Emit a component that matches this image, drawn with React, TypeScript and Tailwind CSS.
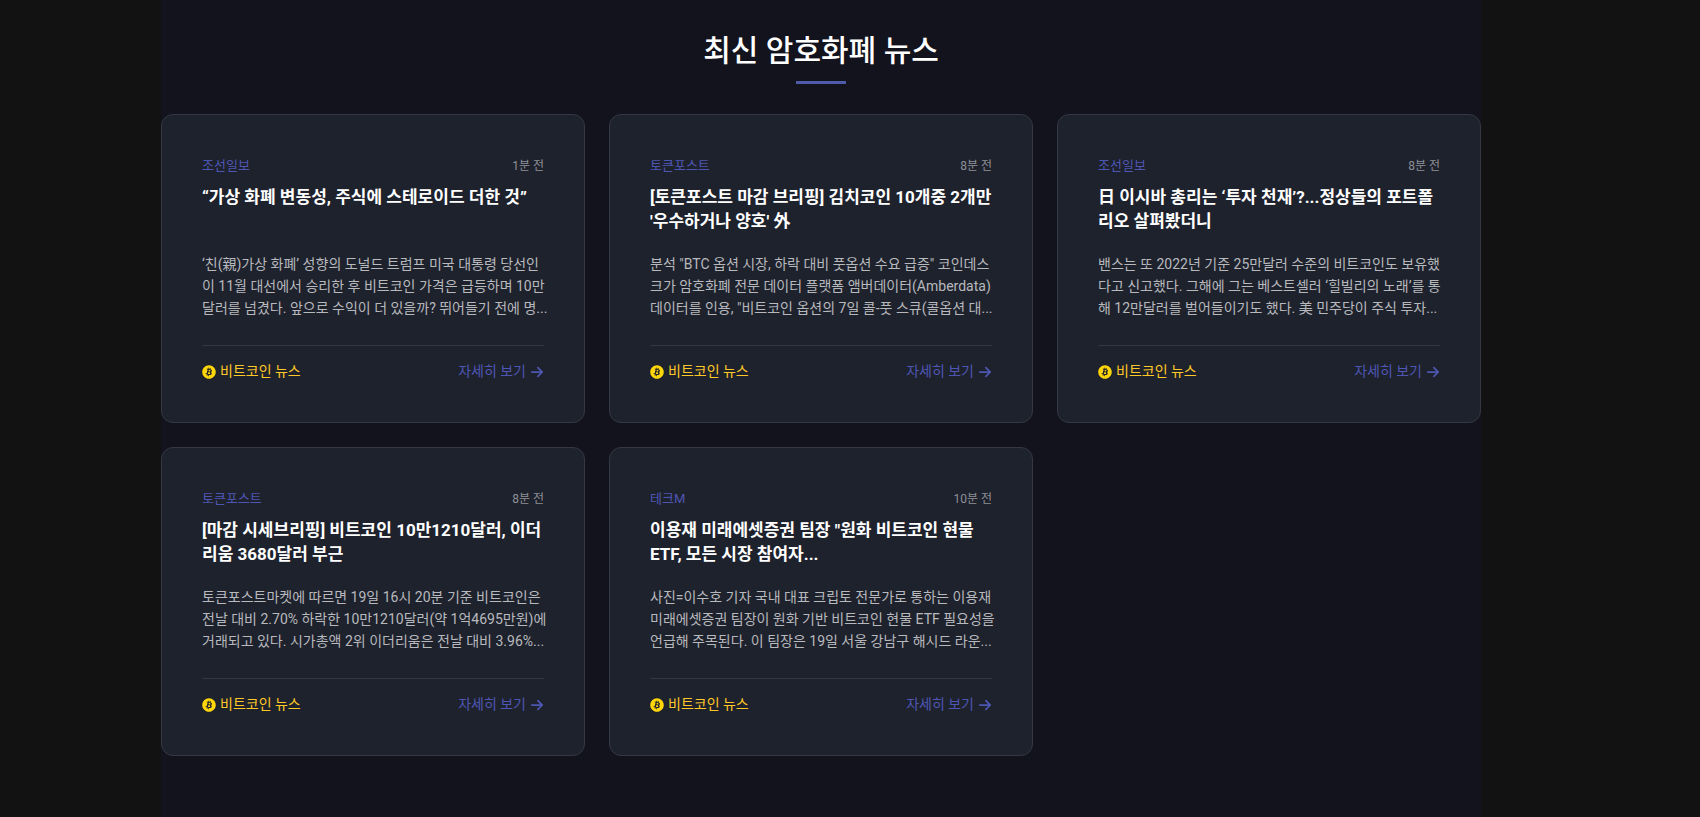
import { FaArrowRight } from "react-icons/fa6";
import { FaBitcoin } from "react-icons/fa";

type NewsItem = {
  source: string;
  time: string;
  title: string[];
  summary: string[];
};

const news: NewsItem[] = [
  {
    source: "조선일보",
    time: "1분 전",
    title: ["“가상 화폐 변동성, 주식에 스테로이드 더한 것”"],
    summary: [
      "‘친(親)가상 화폐’ 성향의 도널드 트럼프 미국 대통령 당선인",
      "이 11월 대선에서 승리한 후 비트코인 가격은 급등하며 10만",
      "달러를 넘겼다. 앞으로 수익이 더 있을까? 뛰어들기 전에 명...",
    ],
  },
  {
    source: "토큰포스트",
    time: "8분 전",
    title: ["[토큰포스트 마감 브리핑] 김치코인 10개중 2개만", "'우수하거나 양호' 外"],
    summary: [
      "분석 \"BTC 옵션 시장, 하락 대비 풋옵션 수요 급증\" 코인데스",
      "크가 암호화폐 전문 데이터 플랫폼 앰버데이터(Amberdata)",
      "데이터를 인용, \"비트코인 옵션의 7일 콜-풋 스큐(콜옵션 대...",
    ],
  },
  {
    source: "조선일보",
    time: "8분 전",
    title: ["日 이시바 총리는 ‘투자 천재’?...정상들의 포트폴", "리오 살펴봤더니"],
    summary: [
      "밴스는 또 2022년 기준 25만달러 수준의 비트코인도 보유했",
      "다고 신고했다. 그해에 그는 베스트셀러 ‘힐빌리의 노래’를 통",
      "해 12만달러를 벌어들이기도 했다. 美 민주당이 주식 투자...",
    ],
  },
  {
    source: "토큰포스트",
    time: "8분 전",
    title: ["[마감 시세브리핑] 비트코인 10만1210달러, 이더", "리움 3680달러 부근"],
    summary: [
      "토큰포스트마켓에 따르면 19일 16시 20분 기준 비트코인은",
      "전날 대비 2.70% 하락한 10만1210달러(약 1억4695만원)에",
      "거래되고 있다. 시가총액 2위 이더리움은 전날 대비 3.96%...",
    ],
  },
  {
    source: "테크M",
    time: "10분 전",
    title: ["이용재 미래에셋증권 팀장 \"원화 비트코인 현물", "ETF, 모든 시장 참여자..."],
    summary: [
      "사진=이수호 기자 국내 대표 크립토 전문가로 통하는 이용재",
      "미래에셋증권 팀장이 원화 기반 비트코인 현물 ETF 필요성을",
      "언급해 주목된다. 이 팀장은 19일 서울 강남구 해시드 라운...",
    ],
  },
];

function Lines({ lines }: { lines: string[] }) {
  return (
    <>
      {lines.map((line) => (
        <span key={line} className="block whitespace-nowrap">
          {line}
        </span>
      ))}
    </>
  );
}

function NewsCard({ item }: { item: NewsItem }) {
  return (
    <article className="rounded-xl border border-[#343843] bg-[#1e222d] p-10">
      <div className="flex items-center justify-between mb-2 leading-[22px]">
        <span className="text-[13px] text-[#4e56b4]">{item.source}</span>
        <span className="text-[12px] text-[#8e9096]">{item.time}</span>
      </div>
      <h3 className="min-h-12 mb-5 text-[17px] leading-6 font-bold text-white">
        <Lines lines={item.title} />
      </h3>
      <p className="mb-[26px] text-[14px] leading-[22px] text-[#b8b9bd]">
        <Lines lines={item.summary} />
      </p>
      <div className="flex items-center justify-between border-t border-[#343843] pt-[15px] text-[14px] leading-[21px]">
        <span className="flex items-center gap-1 text-[#ffc826]">
          <FaBitcoin className="size-[14px] text-[#ffd60a]" />
          비트코인 뉴스
        </span>
        <a href="#" className="flex items-center gap-1 text-[#4e56b4]">
          자세히 보기
          <FaArrowRight className="size-[14px]" />
        </a>
      </div>
    </article>
  );
}

export default function App() {
  return (
    <div className="min-h-screen bg-[#121212] pr-[58px] font-['Roboto','Noto_Sans_CJK_KR',sans-serif]">
      <section className="mx-auto min-h-screen max-w-[1320px] bg-[#13131d] pt-7 pb-15">
        <div className="flex flex-col items-center mb-[30px]">
          <h2 className="mb-2 text-[30px] leading-[45px] font-medium text-white">최신 암호화폐 뉴스</h2>
          <div className="h-[3px] w-[50px] bg-[#4f5aa8]" />
        </div>
        <div className="grid gap-6 md:grid-cols-2 lg:grid-cols-3">
          {news.map((item) => (
            <NewsCard key={item.title[0]} item={item} />
          ))}
        </div>
      </section>
    </div>
  );
}
